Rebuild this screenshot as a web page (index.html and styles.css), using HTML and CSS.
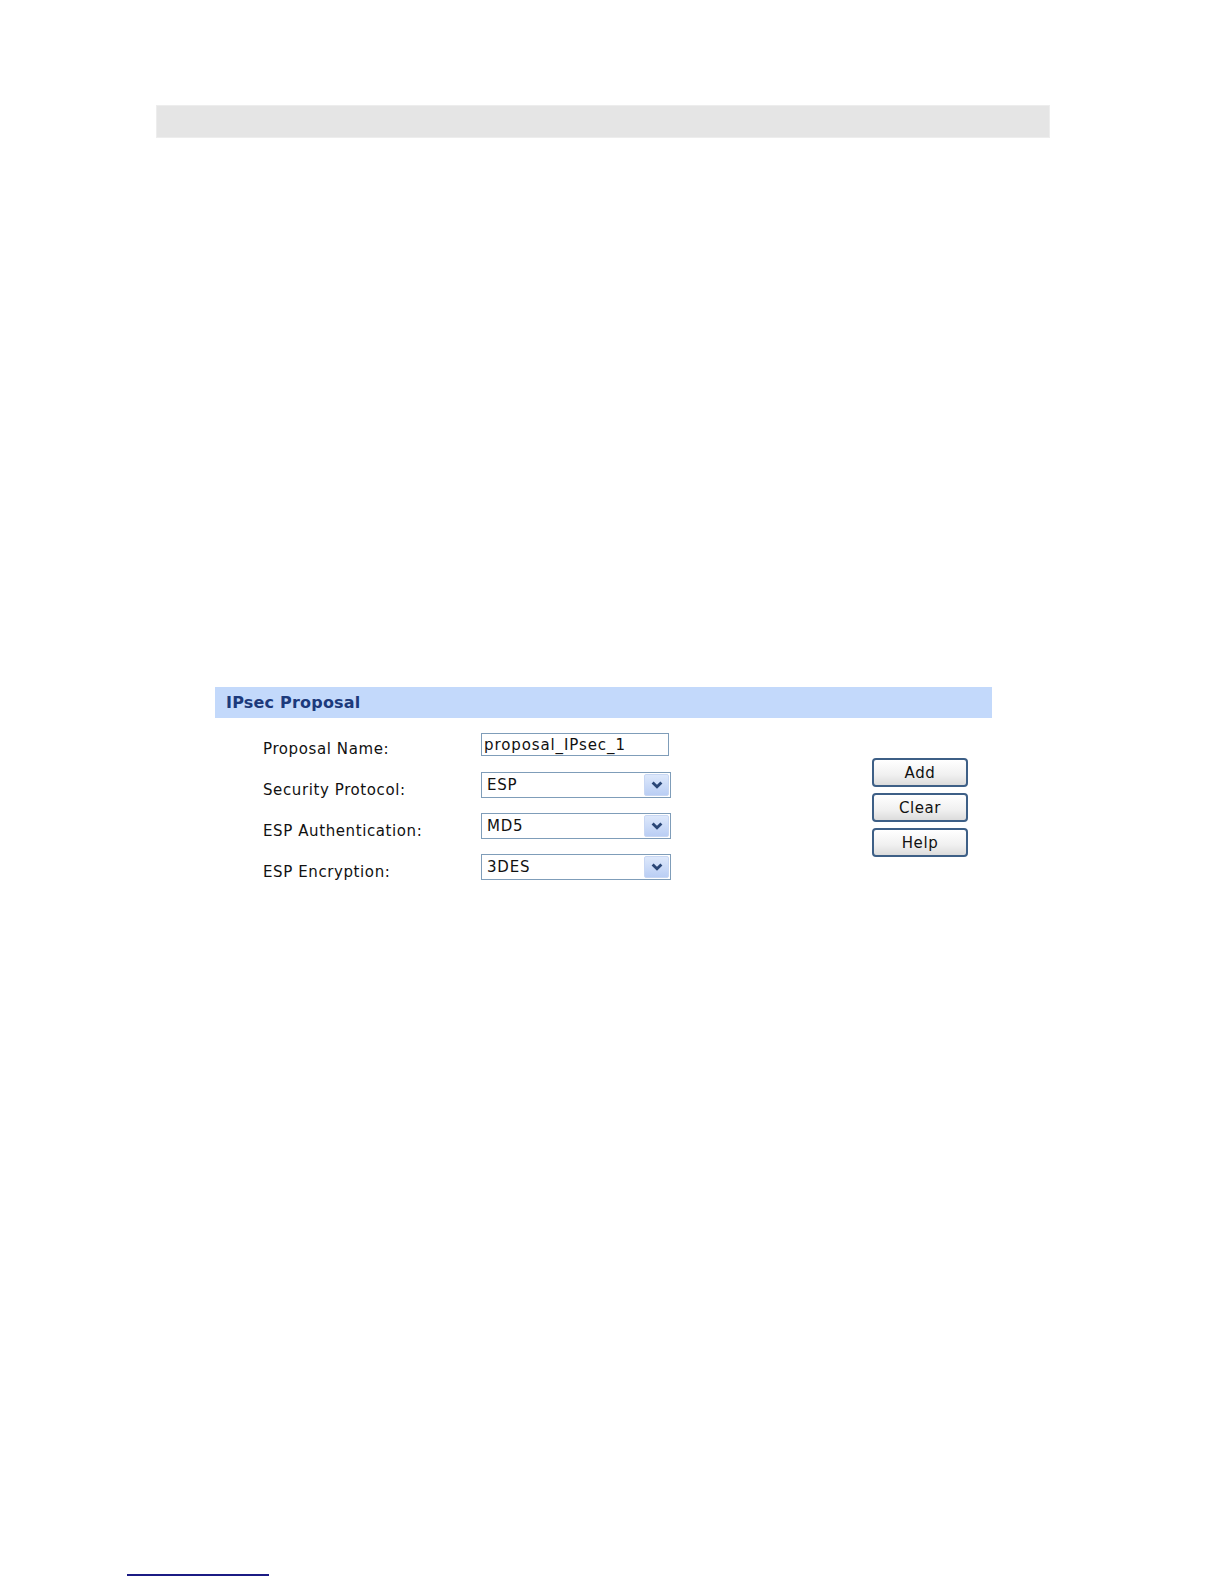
FILE: index.html
```html
<!DOCTYPE html>
<html>
<head>
<meta charset="utf-8">
<link rel="stylesheet" href="styles.css">
</head>
<body>
<div class="page">
  <div class="topbar"></div>
  <div class="panel">
    <div class="panel-head">IPsec Proposal</div>
    <div class="panel-body">
      <div class="fields">
        <div class="row first">
          <span class="label">Proposal Name:</span>
          <div class="textbox">proposal_IPsec_1</div>
        </div>
        <div class="row">
          <span class="label">Security Protocol:</span>
          <div class="select"><span class="val">ESP</span><span class="arrow"><svg width="12" height="8" viewBox="0 0 12 8"><path d="M1.6 1.4 L6 5.8 L10.4 1.4" fill="none" stroke="#2a4676" stroke-width="2.8"/></svg></span></div>
        </div>
        <div class="row">
          <span class="label">ESP Authentication:</span>
          <div class="select"><span class="val">MD5</span><span class="arrow"><svg width="12" height="8" viewBox="0 0 12 8"><path d="M1.6 1.4 L6 5.8 L10.4 1.4" fill="none" stroke="#2a4676" stroke-width="2.8"/></svg></span></div>
        </div>
        <div class="row">
          <span class="label">ESP Encryption:</span>
          <div class="select"><span class="val">3DES</span><span class="arrow"><svg width="12" height="8" viewBox="0 0 12 8"><path d="M1.6 1.4 L6 5.8 L10.4 1.4" fill="none" stroke="#2a4676" stroke-width="2.8"/></svg></span></div>
        </div>
      </div>
      <div class="buttons">
        <div class="btn">Add</div>
        <div class="btn">Clear</div>
        <div class="btn">Help</div>
      </div>
    </div>
  </div>
  <div class="footline"></div>
</div>
</body>
</html>
```
FILE: styles.css
```css
html, body {
  margin: 0;
  padding: 0;
  background: #ffffff;
}
.page {
  width: 1224px;
  height: 1584px;
  box-sizing: border-box;
  padding-top: 105px;
  overflow: hidden;
  font-family: "DejaVu Sans", Verdana, sans-serif;
}
.topbar {
  margin-left: 156px;
  width: 894px;
  height: 33px;
  box-sizing: border-box;
  background: #e5e5e5;
  border: 1px solid #ededed;
}
.panel {
  margin-left: 215px;
  margin-top: 549px;
  width: 777px;
}
.panel-head {
  height: 31px;
  box-sizing: border-box;
  padding-top: 1px;
  background: #c3d9fb;
  color: #1c3a7c;
  font-weight: bold;
  font-size: 16px;
  line-height: 30px;
  padding-left: 11px;
  letter-spacing: 0.2px;
}
.panel-body {
  display: flex;
  box-sizing: border-box;
  height: 162px;
  padding-top: 15px;
}
.fields {
  display: flex;
  flex-direction: column;
  gap: 15px;
  padding-left: 48px;
}
.row {
  display: flex;
  align-items: flex-start;
  height: 26px;
}
.row.first {
  height: 23px;
  margin-bottom: 1px;
}
.label {
  width: 218px;
  font-size: 15px;
  line-height: 18px;
  color: #111;
  letter-spacing: 0.6px;
  padding-top: 9px;
}
.row.first .label {
  padding-top: 7px;
}
.textbox {
  width: 188px;
  height: 23px;
  box-sizing: border-box;
  border: 1px solid #7f9db9;
  font-size: 15px;
  line-height: 19px;
  padding-top: 2px;
  padding-left: 2px;
  color: #111;
  letter-spacing: 0.9px;
}
.select {
  width: 190px;
  height: 26px;
  box-sizing: border-box;
  border: 1px solid #7f9db9;
  display: flex;
  align-items: center;
  justify-content: space-between;
  font-size: 15px;
  line-height: 24px;
  color: #111;
}
.select .val {
  padding-left: 5px;
  letter-spacing: 0.8px;
}
.select .arrow {
  width: 25px;
  height: 22px;
  margin-right: 1px;
  background: linear-gradient(#dde8fb, #bacef4);
  border: 1px solid #c8d7f3;
  border-radius: 2px;
  display: flex;
  align-items: center;
  justify-content: center;
  box-sizing: border-box;
}
.buttons {
  display: flex;
  flex-direction: column;
  gap: 6px;
  margin-left: 201px;
  margin-top: 25px;
}
.btn {
  width: 96px;
  height: 29px;
  box-sizing: border-box;
  border: 2px solid #3d5f86;
  border-radius: 4px;
  background: linear-gradient(#ffffff, #f0f0f0 60%, #dcdcdc);
  font-size: 15px;
  line-height: 27px;
  text-align: center;
  color: #111;
  letter-spacing: 0.6px;
}
.footline {
  margin-left: 127px;
  margin-top: 694px;
  width: 142px;
  height: 2px;
  background: #1b1b84;
}
```
